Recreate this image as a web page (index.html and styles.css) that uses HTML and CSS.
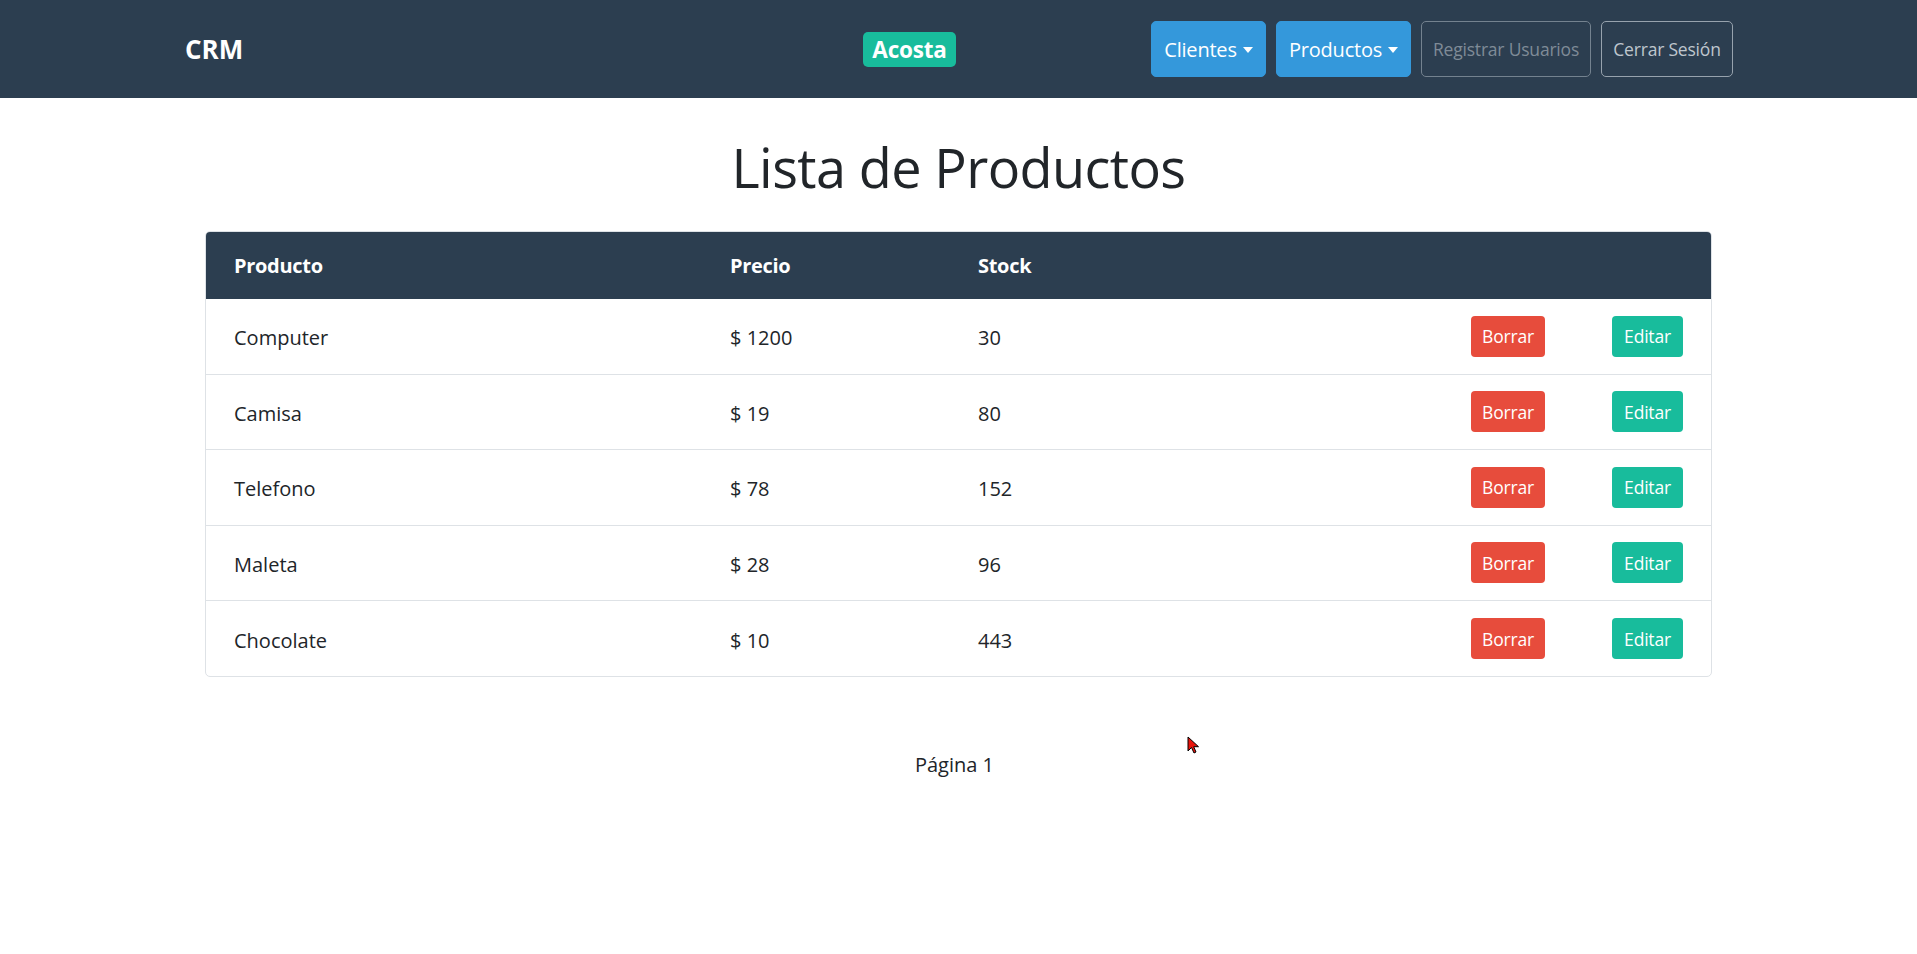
FILE: index.html
```html
<!DOCTYPE html>
<html lang="es">
<head>
<meta charset="utf-8">
<title>CRM - Lista de Productos</title>
<link rel="stylesheet" href="styles.css">
</head>
<body>
<nav class="navbar">
  <a class="brand" href="#">CRM</a>
  <span class="badge">Acosta</span>
  <div class="nav-buttons">
    <button class="btn btn-info">Clientes<span class="caret"></span></button>
    <button class="btn btn-info">Productos<span class="caret"></span></button>
    <button class="btn btn-outline">Registrar Usuarios</button>
    <button class="btn btn-outline btn-light">Cerrar Sesión</button>
  </div>
</nav>

<main class="main">
  <h1 class="title">Lista de Productos</h1>
  <div class="table-wrap">
    <table class="table">
      <colgroup>
        <col class="c-prod"><col class="c-price"><col class="c-stock"><col class="c-del"><col class="c-edit">
      </colgroup>
      <thead>
        <tr><th>Producto</th><th>Precio</th><th>Stock</th><th></th><th></th></tr>
      </thead>
      <tbody>
        <tr><td>Computer</td><td>$ 1200</td><td>30</td><td><button class="sm sm-danger">Borrar</button></td><td><button class="sm sm-success">Editar</button></td></tr>
        <tr><td>Camisa</td><td>$ 19</td><td>80</td><td><button class="sm sm-danger">Borrar</button></td><td><button class="sm sm-success">Editar</button></td></tr>
        <tr><td>Telefono</td><td>$ 78</td><td>152</td><td><button class="sm sm-danger">Borrar</button></td><td><button class="sm sm-success">Editar</button></td></tr>
        <tr><td>Maleta</td><td>$ 28</td><td>96</td><td><button class="sm sm-danger">Borrar</button></td><td><button class="sm sm-success">Editar</button></td></tr>
        <tr><td>Chocolate</td><td>$ 10</td><td>443</td><td><button class="sm sm-danger">Borrar</button></td><td><button class="sm sm-success">Editar</button></td></tr>
      </tbody>
    </table>
  </div>
  <div class="pagination">Página 1</div>
</main>

<svg class="cursor" width="13" height="19" viewBox="0 0 13 19" aria-hidden="true">
  <path d="M1 1 L1 15 L4.5 11.5 L7 17 L9 16 L6.7 10.7 L11.5 10.7 Z" fill="#e8140c" stroke="#000" stroke-width="1"/>
</svg>
</body>
</html>
```

FILE: styles.css
```css
* { box-sizing: border-box; }

body {
  margin: 0;
  font-family: "Open Sans", "Noto Sans", sans-serif;
  color: #212529;
  background: #fff;
  position: relative;
  min-height: 954px;
}

/* Navbar */
.navbar {
  background: #2c3e50;
  height: 98px;
  display: flex;
  align-items: center;
  padding: 0 184px 0 185px;
}

.brand {
  flex: 0 0 678px;
  color: #fff;
  font-weight: 700;
  font-size: 26px;
  text-decoration: none;
}

.badge {
  background: #18bc9c;
  color: #fff;
  font-weight: 700;
  font-size: 22.5px;
  height: 35px;
  width: 93px;
  display: flex;
  align-items: center;
  justify-content: center;
  border-radius: 5px;
  letter-spacing: -0.2px;
}

.nav-buttons {
  margin-left: auto;
  display: flex;
  gap: 10px;
}

.btn {
  height: 56px;
  border-radius: 5px;
  font-family: inherit;
  display: flex;
  align-items: center;
  justify-content: center;
  cursor: pointer;
  padding: 0;
}

.btn-info {
  background: #3498db;
  border: 1px solid #3498db;
  color: #fff;
  font-size: 20px;
  letter-spacing: -0.2px;
}

.btn-info:first-child { width: 115px; }
.btn-info:nth-child(2) { width: 135px; }

.caret {
  display: inline-block;
  margin-left: 6px;
  width: 0;
  height: 0;
  border-left: 5px solid transparent;
  border-right: 5px solid transparent;
  border-top: 6px solid #fff;
  margin-top: 2px;
}

.btn-outline {
  background: transparent;
  border: 1px solid #74828f;
  color: #7f8b97;
  font-size: 17.5px;
  letter-spacing: -0.2px;
  width: 170px;
}

.btn-light {
  color: #bfc6cd;
  border-color: #97a2ad;
  width: 132px;
}

/* Main */
.main {
  display: flex;
  flex-direction: column;
  align-items: center;
}

.title {
  margin: 36px 0 31px;
  font-size: 54px;
  font-weight: 400;
  line-height: 66px;
  letter-spacing: -0.6px;
  color: #212529;
}

.table-wrap {
  width: 1507px;
  border: 1px solid #dee2e6;
  border-radius: 5px;
  overflow: hidden;
}

.table {
  width: 100%;
  border-collapse: collapse;
  table-layout: fixed;
}

.c-prod { width: 496px; }
.c-price { width: 248px; }
.c-stock { width: 495px; }
.c-del { width: 141px; }
.c-edit { width: 125px; }

.table thead tr {
  background: #2c3e50;
  height: 67px;
}

.table th {
  color: #fff;
  font-size: 20px;
  font-weight: 700;
  text-align: left;
  padding: 0 0 0 28px;
  letter-spacing: -0.3px;
}

.table td {
  height: 75.5px;
  padding: 3px 0 0 28px;
  font-size: 20px;
  border-top: 1px solid #dee2e6;
}

.table tbody tr:first-child td { border-top: none; height: 75px; }

.sm {
  height: 41px;
  border: none;
  border-radius: 4px;
  color: #fff;
  font-family: inherit;
  font-size: 17.5px;
  letter-spacing: -0.2px;
  padding: 0;
  cursor: pointer;
  margin-top: -3px;
}

.sm-danger { background: #e74c3c; width: 74px; margin-left: -2px; }
.sm-success { background: #18bc9c; width: 71px; margin-left: -2px; }

.pagination {
  margin-top: 74px;
  margin-right: 8px;
  font-size: 20px;
}

.cursor {
  position: absolute;
  left: 1187px;
  top: 736px;
}
```
